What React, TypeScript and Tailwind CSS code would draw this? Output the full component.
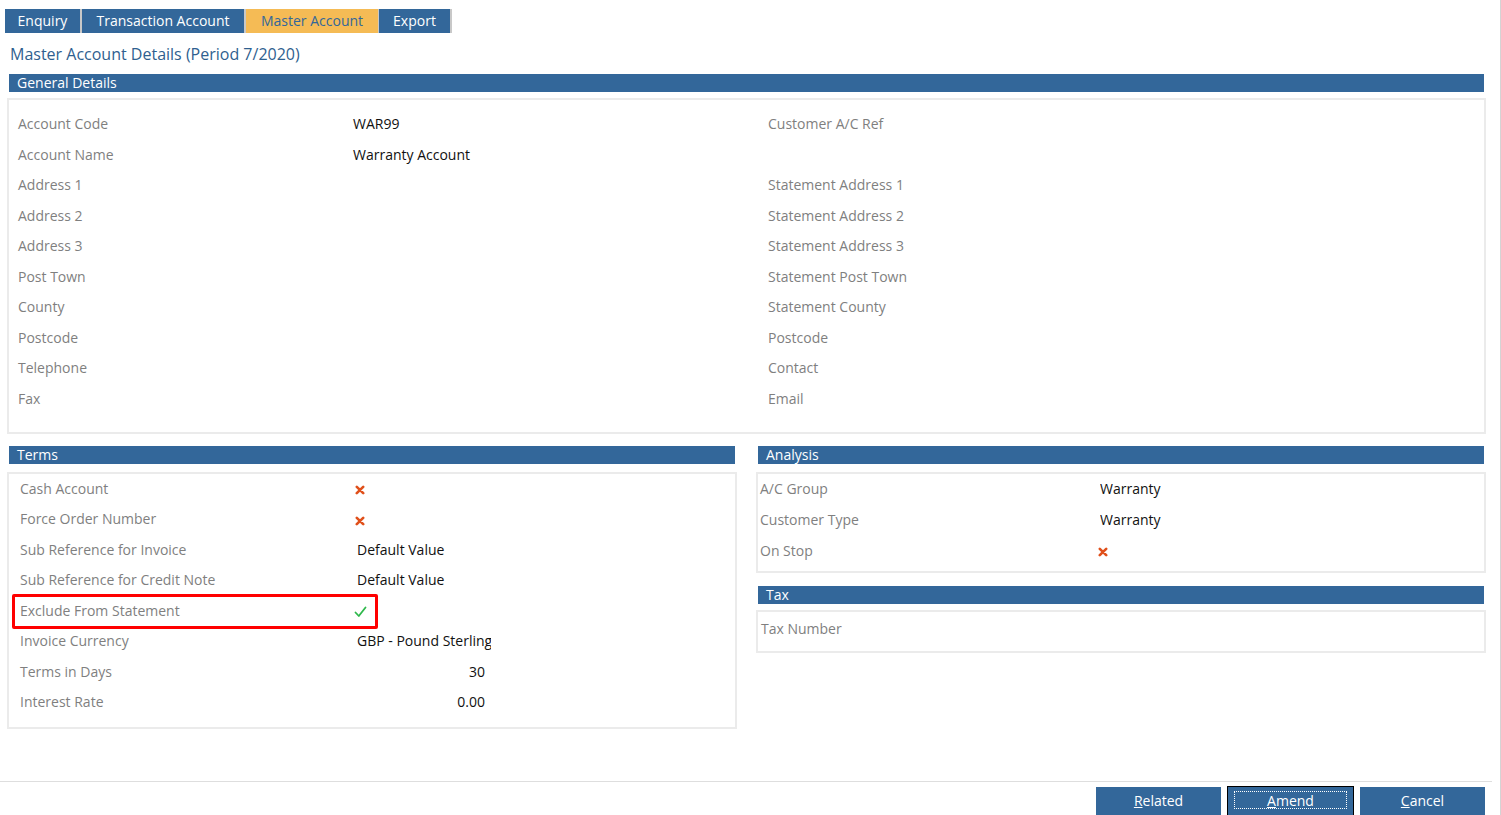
import React from "react";

const blue = "bg-[#33679a]";

function Cross() {
  return (
    <svg width="10" height="10" viewBox="0 0 10 10" className="inline-block">
      <path d="M1.8 1.8 L8.2 8.2 M8.2 1.8 L1.8 8.2" stroke="#e0501b" strokeWidth="2.6" strokeLinecap="round" />
    </svg>
  );
}

function Check() {
  return (
    <svg width="13" height="12" viewBox="0 0 13 12" className="inline-block">
      <path d="M1.5 6.5 L4.8 10 L11.5 1.5" stroke="#2eb84b" strokeWidth="1.8" fill="none" strokeLinecap="round" strokeLinejoin="round" />
    </svg>
  );
}

function Header({ title }: { title: string }) {
  return (
    <div className={`${blue} mx-[2px] h-[18px] pl-[8px] text-[14px] leading-[18px] text-white`}>
      {title}
    </div>
  );
}

const general: [string, string, string][] = [
  ["Account Code", "WAR99", "Customer A/C Ref"],
  ["Account Name", "Warranty Account", ""],
  ["Address 1", "", "Statement Address 1"],
  ["Address 2", "", "Statement Address 2"],
  ["Address 3", "", "Statement Address 3"],
  ["Post Town", "", "Statement Post Town"],
  ["County", "", "Statement County"],
  ["Postcode", "", "Postcode"],
  ["Telephone", "", "Contact"],
  ["Fax", "", "Email"],
];

type Val = { text?: string; icon?: "x" | "check"; right?: boolean; box?: boolean };

const terms: [string, Val][] = [
  ["Cash Account", { icon: "x" }],
  ["Force Order Number", { icon: "x" }],
  ["Sub Reference for Invoice", { text: "Default Value" }],
  ["Sub Reference for Credit Note", { text: "Default Value" }],
  ["Exclude From Statement", { icon: "check", box: true }],
  ["Invoice Currency", { text: "GBP - Pound Sterling" }],
  ["Terms in Days", { text: "30", right: true }],
  ["Interest Rate", { text: "0.00", right: true }],
];

const analysis: [string, Val][] = [
  ["A/C Group", { text: "Warranty" }],
  ["Customer Type", { text: "Warranty" }],
  ["On Stop", { icon: "x" }],
];

function Value({ v }: { v: Val }) {
  if (v.icon === "x") return <span className="-ml-[2px] pt-[3px] leading-none"><Cross /></span>;
  if (v.icon === "check") return <span className="-ml-[3px] pt-[3px] leading-none"><Check /></span>;
  return (
    <span className={`block w-full overflow-hidden whitespace-nowrap text-[#111] ${v.right ? "pr-[6px] text-right" : ""}`}>
      {v.text}
    </span>
  );
}

function Btn({ first, rest, focus }: { first: string; rest: string; focus?: boolean }) {
  return (
    <button
      className={`${blue} relative h-[30px] w-[125px] pb-[3px] text-[14px] text-white ${focus ? "outline outline-1 outline-black" : ""}`}
    >
      {focus && <span className="absolute inset-x-[6px] top-[4px] h-[18px] border border-dotted border-white" />}
      <span className="relative">
        <span className="underline">{first}</span>
        {rest}
      </span>
    </button>
  );
}

export default function App() {
  return (
    <div
      className="relative min-h-[815px] w-[1501px] overflow-hidden bg-white text-[14px] text-[#7f7f7f]"
      style={{ fontFamily: "'Open Sans', 'Noto Sans', sans-serif" }}
    >
      <div className="absolute right-0 top-0 h-full w-[1px] bg-[#d4d4d4]" />

      {/* tabs */}
      <div className="flex pl-[5px] pt-[9px]">
        <div className="flex h-[24px] bg-[#c8c8c8] pr-[2px] text-[14px] leading-[24px]">
          <div className={`${blue} w-[75px] text-center text-white`}>Enquiry</div>
          <div className={`${blue} ml-[2px] w-[162px] text-center text-white`}>Transaction Account</div>
          <div className="ml-[2px] w-[132px] bg-[#f5bb55] text-center text-[#33679a]">Master Account</div>
          <div className={`${blue} ml-[1px] w-[71px] text-center text-white`}>Export</div>
        </div>
      </div>

      <div className="pl-[10px] pt-[9px] text-[16px] leading-[24px] text-[#2f5f8f]">
        Master Account Details (Period 7/2020)
      </div>

      <div className="box-content w-[1479px] pl-[7px] pt-[8px]">
        <Header title="General Details" />
        <div className="mt-[6px] h-[336px] border-2 border-[#ebebeb] pt-[8px]">
          {general.map(([l, v, r]) => (
            <div key={l} className="flex h-[30.55px] items-start pt-[6px] leading-[20px]">
              <div className="w-[344px] pl-[9px]">{l}</div>
              <div className="w-[415px] text-[#111]">{v}</div>
              <div>{r}</div>
            </div>
          ))}
        </div>

        <div className="mt-[12px] flex gap-[19px]">
          <div className="w-[730px]">
            <Header title="Terms" />
            <div className="mt-[8px] h-[257px] border-2 border-[#ebebeb]">
              {terms.map(([l, v]) => (
                <div key={l} className="relative flex h-[30.45px] items-start pt-[5px] leading-[20px]">
                  {v.box && (
                    <div className="absolute left-[3px] top-[-2px] h-[35px] w-[366px] rounded-[2px] border-[3px] border-[#ff0000]" />
                  )}
                  <div className="w-[348px] pl-[11px]">{l}</div>
                  <div className="flex w-[134px]">
                    <Value v={v} />
                  </div>
                </div>
              ))}
            </div>
          </div>

          <div className="w-[730px]">
            <Header title="Analysis" />
            <div className="mt-[8px] h-[101px] border-2 border-[#ebebeb]">
              {analysis.map(([l, v]) => (
                <div key={l} className="flex h-[31px] items-start pt-[5px] leading-[20px]">
                  <div className="w-[342px] pl-[2px]">{l}</div>
                  <div className="flex w-[200px]">
                    <Value v={v} />
                  </div>
                </div>
              ))}
            </div>

            <div className="mt-[13px]">
              <Header title="Tax" />
              <div className="mt-[6px] h-[43px] border-2 border-[#ebebeb]">
                <div className="pl-[3px] pt-[7px] leading-[20px]">Tax Number</div>
              </div>
            </div>
          </div>
        </div>
      </div>

      <div className="mt-[52px] w-[1492px] border-t border-[#dedede] pt-[5px]">
        <div className="flex justify-end gap-[7px] pr-[7px]">
          <Btn first="R" rest="elated" />
          <Btn first="A" rest="mend" focus />
          <Btn first="C" rest="ancel" />
        </div>
      </div>
    </div>
  );
}
